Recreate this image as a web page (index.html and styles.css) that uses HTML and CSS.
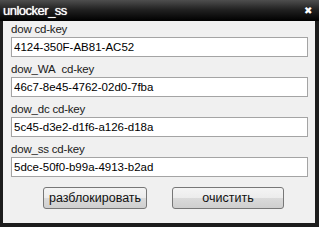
FILE: index.html
```html
<!DOCTYPE html>
<head>
    <link rel="stylesheet" href="styles.css">
</head>
<body>
    <div class="window">
        <div class="titlebar">
            <div class="title">unlocker_ss</div>
            <div class="close">&#x2716;</div>
        </div>
        <div class="content">
            <div class="field">
                <div class="label">dow cd-key</div>
                <input class="key" type="text" value="4124-350F-AB81-AC52">
            </div>
            <div class="field">
                <div class="label">dow_WA&nbsp; cd-key</div>
                <input class="key" type="text" value="46c7-8e45-4762-02d0-7fba">
            </div>
            <div class="field">
                <div class="label">dow_dc cd-key</div>
                <input class="key" type="text" value="5c45-d3e2-d1f6-a126-d18a">
            </div>
            <div class="field">
                <div class="label">dow_ss cd-key</div>
                <input class="key" type="text" value="5dce-50f0-b99a-4913-b2ad">
            </div>
            <div class="buttons">
                <button class="btn unlock">разблокировать</button>
                <button class="btn clear">очистить</button>
            </div>
        </div>
    </div>
</body>
</html>
```

FILE: styles.css
```css
body {
    margin: 0;
    background-color: #111;
    font-family: "Liberation Sans", Arial, sans-serif;
}
.window {
    width: 312px;
    height: 223px;
    border-left: 3px solid #1c1c1c;
    border-right: 4px solid #1c1c1c;
    border-bottom: 4px solid #1c1c1c;
    background-color: #f0f0f0;
    display: flex;
    flex-direction: column;
}
.titlebar {
    height: 21px;
    margin-left: -3px;
    margin-right: -4px;
    background: linear-gradient(#4e4e4e, #222 45%, #000);
    display: flex;
    align-items: center;
    justify-content: space-between;
}
.title {
    color: #fff;
    font-size: 13px;
    letter-spacing: -0.5px;
    padding-left: 3px;
    text-shadow: 0 0 1px #fff;
}
.close {
    color: #fff;
    font-size: 10px;
    padding-right: 7px;
}
.content {
    padding: 0 4px 0 8px;
}
.field {
    margin-bottom: 4px;
}
.label {
    height: 16px;
    line-height: 17px;
    font-size: 11.5px;
    letter-spacing: -0.2px;
    color: #1a1a1a;
}
.key {
    box-sizing: border-box;
    width: 297px;
    height: 20px;
    margin: 0;
    border: 1px solid #a4a4a4;
    background-color: #fff;
    padding: 0 2px;
    font-family: "Liberation Sans", Arial, sans-serif;
    font-size: 11.5px;
    color: #000;
    outline: none;
}
.buttons {
    display: flex;
    margin-top: 10px;
    padding-left: 32px;
    gap: 25px;
}
.btn {
    box-sizing: border-box;
    height: 22px;
    border: 1px solid #777;
    border-radius: 3px;
    background: linear-gradient(#f4f4f4, #ececec 50%, #dadada 51%, #cfcfcf);
    font-family: "Liberation Sans", Arial, sans-serif;
    font-size: 12.5px;
    color: #111;
    padding: 0;
}
.unlock {
    width: 104px;
}
.clear {
    width: 112px;
}
```
